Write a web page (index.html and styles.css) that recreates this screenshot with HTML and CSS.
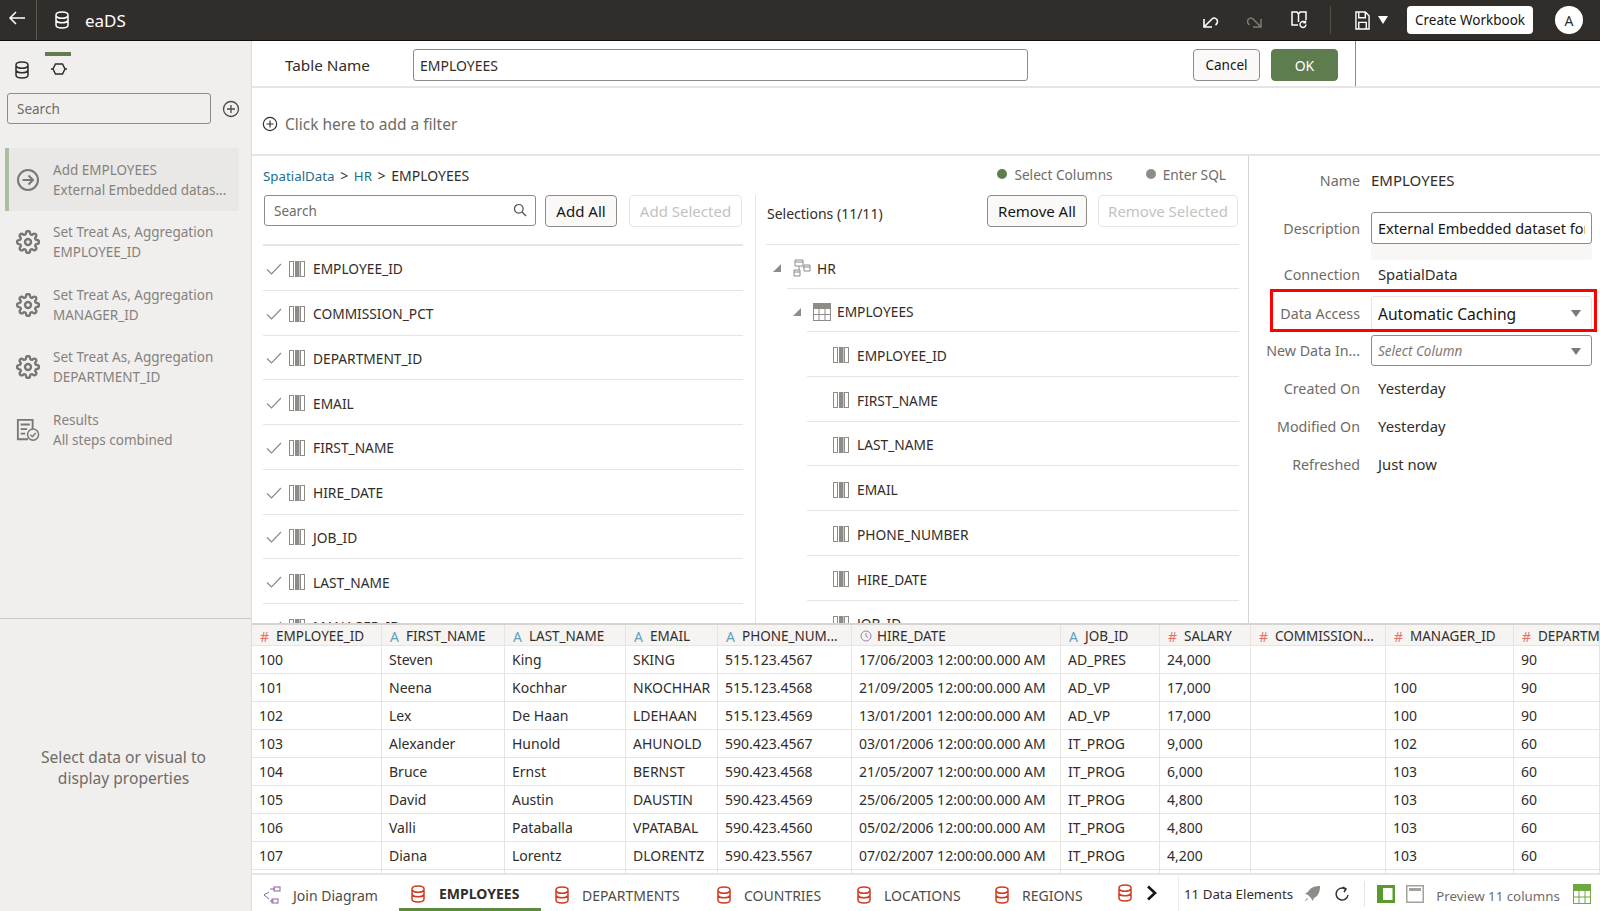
FILE: index.html
```html
<!DOCTYPE html>
<html lang="en">
  <head>
    <meta charset="UTF-8" />
    <meta name="viewport" content="width=device-width, initial-scale=1.0" />
    <title>eaDS</title>
    <link rel="stylesheet" href="styles.css">
  </head>

  <body>
    <svg class="defs" width="0" height="0">
      <symbol id="i-db" viewBox="0 0 16 18">
        <path d="M2 4c0-1.7 2-3 6-3s6 1.300 6 3v10c0 1.700-2 3-6 3s-6-1.300-6-3z M2 5c1 1.500 3.500 2.200 6 2.200S13 6.500 14 5 M2 9.500c1 1.500 3.500 2.200 6 2.200s5-.7 6-2.200" fill="none" stroke="currentColor" stroke-width="1.500"/>
      </symbol>
      <symbol id="i-step" viewBox="0 0 18 14">
        <path d="M1 7h2M15 7h2M5.500 2h7L15 7l-2.500 5h-7L3 7z" fill="none" stroke="currentColor" stroke-width="1.500"/>
      </symbol>
      <symbol id="i-plus" viewBox="0 0 18 18">
        <circle cx="9" cy="9" r="7.500" fill="none" stroke="currentColor" stroke-width="1.300"/>
        <path d="M9 5v8M5 9h8" stroke="currentColor" stroke-width="1.300"/>
      </symbol>
      <symbol id="i-go" viewBox="0 0 24 24">
        <circle cx="12" cy="12" r="10" fill="none" stroke="currentColor" stroke-width="2"/>
        <path d="M6.500 12h10M12.500 7.500l4.500 4.500-4.500 4.500" fill="none" stroke="currentColor" stroke-width="2"/>
      </symbol>
      <symbol id="i-gear" viewBox="0 0 24 24">
        <circle cx="12" cy="12" r="3" fill="none" stroke="currentColor" stroke-width="2.400"/>
        <path d="M19.400 15a1.650 1.650 0 0 0 .33 1.820l.06.06a2 2 0 0 1 0 2.830 2 2 0 0 1-2.830 0l-.06-.06a1.650 1.650 0 0 0-1.820-.33 1.650 1.650 0 0 0-1 1.510V21a2 2 0 0 1-2 2 2 2 0 0 1-2-2v-.09A1.650 1.650 0 0 0 9 19.400a1.650 1.650 0 0 0-1.820.33l-.06.06a2 2 0 0 1-2.830 0 2 2 0 0 1 0-2.830l.06-.06a1.650 1.650 0 0 0 .33-1.820 1.650 1.650 0 0 0-1.510-1H3a2 2 0 0 1-2-2 2 2 0 0 1 2-2h.09A1.650 1.650 0 0 0 4.600 9a1.650 1.650 0 0 0-.33-1.820l-.06-.06a2 2 0 0 1 0-2.830 2 2 0 0 1 2.830 0l.06.06a1.650 1.650 0 0 0 1.820.33H9a1.650 1.650 0 0 0 1-1.510V3a2 2 0 0 1 2-2 2 2 0 0 1 2 2v.09a1.650 1.650 0 0 0 1 1.510 1.650 1.650 0 0 0 1.820-.33l.06-.06a2 2 0 0 1 2.830 0 2 2 0 0 1 0 2.830l-.06.06a1.650 1.650 0 0 0-.33 1.820V9a1.650 1.650 0 0 0 1.510 1H21a2 2 0 0 1 2 2 2 2 0 0 1-2 2h-.09a1.650 1.650 0 0 0-1.510 1z" fill="none" stroke="currentColor" stroke-width="2.400"/>
      </symbol>
      <symbol id="i-results" viewBox="0 0 26 26">
        <path d="M13 23H2V2h16v10" fill="none" stroke="currentColor" stroke-width="2"/>
        <path d="M5 7h10M5 12h7M5 17h5" stroke="currentColor" stroke-width="2"/>
        <circle cx="18.500" cy="18" r="6" fill="none" stroke="currentColor" stroke-width="1.600"/>
        <path d="M15.500 18l2.200 2.300 3.600-4" fill="none" stroke="currentColor" stroke-width="1.500"/>
      </symbol>
      <symbol id="i-column" viewBox="0 0 16 16">
        <rect x=".5" y=".5" width="4" height="15" fill="#fff" stroke="#8f8b87"/>
        <rect x="6" y="0" width="4.500" height="16" fill="#8f8b87"/>
        <rect x="11.500" y=".5" width="4" height="15" fill="#fff" stroke="#8f8b87"/>
      </symbol>
      <symbol id="i-check" viewBox="0 0 16 12">
        <path d="M1 6.500l4.500 4.500L15 1" fill="none" stroke="#8a8682" stroke-width="1.100"/>
      </symbol>
      <symbol id="i-search" viewBox="0 0 14 14">
        <circle cx="5.800" cy="5.800" r="4.300" fill="none" stroke="#4f4b47" stroke-width="1.200"/>
        <path d="M9 9l4 4" stroke="#4f4b47" stroke-width="1.200"/>
      </symbol>
      <symbol id="i-corner" viewBox="0 0 10 10">
        <path d="M9 1v8H1z" fill="#8f8b87"/>
      </symbol>
      <symbol id="i-schema" viewBox="0 0 18 18">
        <path d="M2 1h8v6H2zM11 6h6v6h-6zM1 11h6v6H1zM2 3h8M11 8h6M1 13h6M6 7v4M10 8.500h1" fill="none" stroke="#8f8b87"/>
      </symbol>
      <symbol id="i-table" viewBox="0 0 18 18">
        <rect x=".5" y=".5" width="17" height="17" fill="#fff" stroke="#8f8b87"/>
        <rect x="0" y="0" width="18" height="6" fill="#8f8b87"/>
        <path d="M0 11.500h18M6 6v12M12 6v12" stroke="#8f8b87"/>
      </symbol>
      <symbol id="i-clock" viewBox="0 0 12 12">
        <circle cx="6" cy="6" r="5" fill="none" stroke="#9a86ad"/>
        <path d="M6 3v3.200l2 1.300" fill="none" stroke="#9a86ad"/>
      </symbol>
    </svg>

    <div class="app">
      <header class="topbar">
        <button class="back">
          <svg width="18" height="14" viewBox="0 0 18 14"><path d="M17 7H2M8 1L2 7l6 6" fill="none" stroke="#fff" stroke-width="1.500"/></svg>
        </button>
        <svg class="top-db" width="16" height="18"><use href="#i-db"/></svg>
        <span class="doc-name">eaDS</span>
        <div class="top-actions">
          <svg class="undo" width="18" height="18" viewBox="0 0 18 18"><path d="M2 8v8h8M2.500 15.500L10 8c2-2 5.500-.5 5.500 2.500 0 1.500-.7 2.500-2 3.500" fill="none" stroke="#fff" stroke-width="1.600"/></svg>
          <svg class="redo" width="18" height="18" viewBox="0 0 18 18"><path d="M16 8v8H8M15.500 15.500L8 8C6 6 2.500 7.500 2.500 10.500c0 1.500.7 2.500 2 3.500" fill="none" stroke="#7d7975" stroke-width="1.500"/></svg>
          <svg class="book" width="16" height="18" viewBox="0 0 16 18"><path d="M7 14H1V1h5l1.500 2L9 1h6v8M7.500 3v8" fill="none" stroke="#fff" stroke-width="1.500"/><path d="M15 13.500a3 3 0 1 1-1-2.300M14.500 9.500v2.200h-2.200" fill="none" stroke="#fff" stroke-width="1.400"/></svg>
          <span class="top-sep"></span>
          <svg class="save" width="15" height="19" viewBox="0 0 16 20"><path d="M1 1h10l4 4v14H1zM4 1v6h7V1M4 19v-7h8v7" fill="none" stroke="#fff" stroke-width="1.500"/></svg>
          <span class="caret"></span>
          <button class="create-btn">Create Workbook</button>
          <span class="avatar">A</span>
        </div>
      </header>

      <div class="main">
        <aside class="sidebar">
          <div class="side-upper">
            <div class="side-tabs">
              <svg class="side-tab" width="16" height="18"><use href="#i-db"/></svg>
              <span class="side-tab-on"><svg width="18" height="14"><use href="#i-step"/></svg></span>
            </div>
            <div class="side-search">
              <input class="field search-small" placeholder="Search" />
              <svg class="add-step" width="18" height="18"><use href="#i-plus"/></svg>
            </div>
            <ul class="steps">
              <li class="step step-on">
                <svg class="step-icon" width="24" height="24"><use href="#i-go"/></svg>
                <div><p>Add EMPLOYEES</p><p>External Embedded datas...</p></div>
              </li>
              <li class="step">
                <svg class="step-icon" width="24" height="24"><use href="#i-gear"/></svg>
                <div><p>Set Treat As, Aggregation</p><p>EMPLOYEE_ID</p></div>
              </li>
              <li class="step">
                <svg class="step-icon" width="24" height="24"><use href="#i-gear"/></svg>
                <div><p>Set Treat As, Aggregation</p><p>MANAGER_ID</p></div>
              </li>
              <li class="step">
                <svg class="step-icon" width="24" height="24"><use href="#i-gear"/></svg>
                <div><p>Set Treat As, Aggregation</p><p>DEPARTMENT_ID</p></div>
              </li>
              <li class="step">
                <svg class="step-icon" width="26" height="26"><use href="#i-results"/></svg>
                <div><p>Results</p><p>All steps combined</p></div>
              </li>
            </ul>
          </div>
          <div class="side-lower">Select data or visual to<br />display properties</div>
        </aside>

        <main class="content">
          <div class="name-row">
            <div class="name-box">
              <label class="name-label">Table Name</label>
              <input class="field name-input" value="EMPLOYEES" />
              <button class="btn cancel-btn">Cancel</button>
              <button class="btn ok-btn">OK</button>
            </div>
          </div>

          <div class="filter-row">
            <svg width="16" height="16"><use href="#i-plus"/></svg>
            <span>Click here to add a filter</span>
          </div>

          <div class="builder">
            <section class="columns">
              <div class="crumb-row">
                <div class="crumbs">
                  <a href="#">SpatialData</a> <i>&gt;</i> <a href="#">HR</a> <i>&gt;</i> <span>EMPLOYEES</span>
                </div>
                <div class="modes">
                  <span class="mode"><b class="dot dot-on"></b>Select Columns</span>
                  <span class="mode"><b class="dot"></b>Enter SQL</span>
                </div>
              </div>
              <div class="picker">
                <div class="pick-left">
                  <div class="pick-tools">
                    <div class="search-wrap">
                      <input class="field search-large" placeholder="Search" />
                      <svg class="search-icon" width="14" height="14"><use href="#i-search"/></svg>
                    </div>
                    <button class="btn add-all">Add All</button>
                    <button class="btn btn-off add-sel">Add Selected</button>
                  </div>
                  <ul class="col-list">
                    <li><svg width="16" height="12"><use href="#i-check"/></svg><svg width="16" height="16"><use href="#i-column"/></svg>EMPLOYEE_ID</li>
                    <li><svg width="16" height="12"><use href="#i-check"/></svg><svg width="16" height="16"><use href="#i-column"/></svg>COMMISSION_PCT</li>
                    <li><svg width="16" height="12"><use href="#i-check"/></svg><svg width="16" height="16"><use href="#i-column"/></svg>DEPARTMENT_ID</li>
                    <li><svg width="16" height="12"><use href="#i-check"/></svg><svg width="16" height="16"><use href="#i-column"/></svg>EMAIL</li>
                    <li><svg width="16" height="12"><use href="#i-check"/></svg><svg width="16" height="16"><use href="#i-column"/></svg>FIRST_NAME</li>
                    <li><svg width="16" height="12"><use href="#i-check"/></svg><svg width="16" height="16"><use href="#i-column"/></svg>HIRE_DATE</li>
                    <li><svg width="16" height="12"><use href="#i-check"/></svg><svg width="16" height="16"><use href="#i-column"/></svg>JOB_ID</li>
                    <li><svg width="16" height="12"><use href="#i-check"/></svg><svg width="16" height="16"><use href="#i-column"/></svg>LAST_NAME</li>
                    <li><svg width="16" height="12"><use href="#i-check"/></svg><svg width="16" height="16"><use href="#i-column"/></svg>MANAGER_ID</li>
                  </ul>
                </div>
                <div class="pick-right">
                  <div class="pick-tools">
                    <span class="sel-count">Selections (11/11)</span>
                    <button class="btn remove-all">Remove All</button>
                    <button class="btn btn-off remove-sel">Remove Selected</button>
                  </div>
                  <ul class="tree">
                    <li class="tree-top"><svg width="10" height="10"><use href="#i-corner"/></svg><svg class="tree-icon" width="18" height="18"><use href="#i-schema"/></svg>HR</li>
                    <li class="tree-mid"><svg width="10" height="10"><use href="#i-corner"/></svg><svg class="tree-icon" width="18" height="18"><use href="#i-table"/></svg>EMPLOYEES</li>
                    <li class="tree-leaf"><svg width="16" height="16"><use href="#i-column"/></svg>EMPLOYEE_ID</li>
                    <li class="tree-leaf"><svg width="16" height="16"><use href="#i-column"/></svg>FIRST_NAME</li>
                    <li class="tree-leaf"><svg width="16" height="16"><use href="#i-column"/></svg>LAST_NAME</li>
                    <li class="tree-leaf"><svg width="16" height="16"><use href="#i-column"/></svg>EMAIL</li>
                    <li class="tree-leaf"><svg width="16" height="16"><use href="#i-column"/></svg>PHONE_NUMBER</li>
                    <li class="tree-leaf"><svg width="16" height="16"><use href="#i-column"/></svg>HIRE_DATE</li>
                    <li class="tree-leaf"><svg width="16" height="16"><use href="#i-column"/></svg>JOB_ID</li>
                  </ul>
                </div>
              </div>
            </section>

            <section class="props">
              <div class="prop prop-name"><label>Name</label><span class="prop-plain">EMPLOYEES</span></div>
              <div class="prop prop-desc"><label>Description</label><input class="field desc-input" value="External Embedded dataset for EMPLOYEES" /></div>
              <div class="prop prop-conn"><label>Connection</label><span class="prop-value">SpatialData</span></div>
              <div class="prop prop-access">
                <label>Data Access</label>
                <div class="select select-soft">Automatic Caching<span class="select-arrow"></span></div>
                <span class="highlight"></span>
              </div>
              <div class="prop prop-new"><label>New Data In...</label><div class="select select-empty">Select Column<span class="select-arrow"></span></div></div>
              <div class="prop prop-line"><label>Created On</label><span class="prop-value">Yesterday</span></div>
              <div class="prop prop-line"><label>Modified On</label><span class="prop-value">Yesterday</span></div>
              <div class="prop prop-line"><label>Refreshed</label><span class="prop-value">Just now</span></div>
            </section>
          </div>

          <div class="preview">
            <div class="grid-row grid-head">
              <div><b class="t-num">#</b>EMPLOYEE_ID</div>
              <div><b class="t-txt">A</b>FIRST_NAME</div>
              <div><b class="t-txt">A</b>LAST_NAME</div>
              <div><b class="t-txt">A</b>EMAIL</div>
              <div><b class="t-txt">A</b>PHONE_NUM...</div>
              <div><svg class="t-clock" width="12" height="12"><use href="#i-clock"/></svg>HIRE_DATE</div>
              <div><b class="t-txt">A</b>JOB_ID</div>
              <div><b class="t-num">#</b>SALARY</div>
              <div><b class="t-num">#</b>COMMISSION...</div>
              <div><b class="t-num">#</b>MANAGER_ID</div>
              <div><b class="t-num">#</b>DEPARTM</div>
            </div>
            <div class="grid-row"><div>100</div><div>Steven</div><div>King</div><div>SKING</div><div>515.123.4567</div><div>17/06/2003 12:00:00.000 AM</div><div>AD_PRES</div><div>24,000</div><div></div><div></div><div>90</div></div>
            <div class="grid-row"><div>101</div><div>Neena</div><div>Kochhar</div><div>NKOCHHAR</div><div>515.123.4568</div><div>21/09/2005 12:00:00.000 AM</div><div>AD_VP</div><div>17,000</div><div></div><div>100</div><div>90</div></div>
            <div class="grid-row"><div>102</div><div>Lex</div><div>De Haan</div><div>LDEHAAN</div><div>515.123.4569</div><div>13/01/2001 12:00:00.000 AM</div><div>AD_VP</div><div>17,000</div><div></div><div>100</div><div>90</div></div>
            <div class="grid-row"><div>103</div><div>Alexander</div><div>Hunold</div><div>AHUNOLD</div><div>590.423.4567</div><div>03/01/2006 12:00:00.000 AM</div><div>IT_PROG</div><div>9,000</div><div></div><div>102</div><div>60</div></div>
            <div class="grid-row"><div>104</div><div>Bruce</div><div>Ernst</div><div>BERNST</div><div>590.423.4568</div><div>21/05/2007 12:00:00.000 AM</div><div>IT_PROG</div><div>6,000</div><div></div><div>103</div><div>60</div></div>
            <div class="grid-row"><div>105</div><div>David</div><div>Austin</div><div>DAUSTIN</div><div>590.423.4569</div><div>25/06/2005 12:00:00.000 AM</div><div>IT_PROG</div><div>4,800</div><div></div><div>103</div><div>60</div></div>
            <div class="grid-row"><div>106</div><div>Valli</div><div>Pataballa</div><div>VPATABAL</div><div>590.423.4560</div><div>05/02/2006 12:00:00.000 AM</div><div>IT_PROG</div><div>4,800</div><div></div><div>103</div><div>60</div></div>
            <div class="grid-row"><div>107</div><div>Diana</div><div>Lorentz</div><div>DLORENTZ</div><div>590.423.5567</div><div>07/02/2007 12:00:00.000 AM</div><div>IT_PROG</div><div>4,200</div><div></div><div>103</div><div>60</div></div>
            <div class="grid-row"><div></div><div></div><div></div><div></div><div></div><div></div><div></div><div></div><div></div><div></div><div></div></div>
          </div>

          <footer class="tabs">
            <a class="tab tab-join" href="#">
              <svg width="18" height="18" viewBox="0 0 18 18"><path d="M1 9l5-3M1 9l5 4M7 3h5M7 15h4" fill="none" stroke="#8b5f9e"/><rect x="11" y="1" width="6" height="4" fill="none" stroke="#8b5f9e"/><rect x="9" y="13" width="6" height="4" fill="none" stroke="#8b5f9e"/></svg>
              Join Diagram
            </a>
            <a class="tab tab-on" href="#"><svg class="tab-db" width="16" height="18"><use href="#i-db"/></svg>EMPLOYEES</a>
            <a class="tab tab-dept" href="#"><svg class="tab-db" width="16" height="18"><use href="#i-db"/></svg>DEPARTMENTS</a>
            <a class="tab tab-ctry" href="#"><svg class="tab-db" width="16" height="18"><use href="#i-db"/></svg>COUNTRIES</a>
            <a class="tab tab-loc" href="#"><svg class="tab-db" width="16" height="18"><use href="#i-db"/></svg>LOCATIONS</a>
            <a class="tab tab-reg" href="#"><svg class="tab-db" width="16" height="18"><use href="#i-db"/></svg>REGIONS</a>
            <svg class="tab-db tab-more" width="16" height="18"><use href="#i-db"/></svg>
            <svg class="chevron" width="12" height="16" viewBox="0 0 12 16"><path d="M2 1.500L9 8l-7 6.500" fill="none" stroke="#161513" stroke-width="2.600"/></svg>
            <div class="status">
              <span class="elements">11 Data Elements</span>
              <svg class="rocket" width="18" height="18" viewBox="0 0 18 18"><path d="M17 1c-6 0-10 2-12 6L2 8.500 5 10l3 3 1.500 3L11 13c4-2 6-6 6-12zM4 13l-2.500 3.500L5 14z" fill="#8f8b87"/></svg>
              <svg class="refresh" width="16" height="16" viewBox="0 0 16 16"><path d="M14 9a6 6 0 1 1-3-6.200M9 1l3 2-2 3" fill="none" stroke="#312d2a" stroke-width="1.500"/></svg>
              <span class="status-sep"></span>
              <svg width="18" height="18" viewBox="0 0 18 18"><rect width="18" height="18" fill="#5b9a2d"/><rect x="6" y="3" width="9.500" height="12" fill="#fff"/></svg>
              <svg class="panel-off" width="18" height="18" viewBox="0 0 18 18"><rect x=".75" y=".75" width="16.500" height="16.500" fill="#fff" stroke="#a5a19d" stroke-width="1.500"/><rect x="3" y="3" width="12" height="3" fill="#a5a19d"/></svg>
              <span class="preview-count">Preview 11 columns</span>
              <svg class="grid-icon" width="18" height="20" viewBox="0 0 18 20"><rect x=".5" y=".5" width="17" height="19" fill="#fff" stroke="#6fa83f"/><rect width="18" height="7" fill="#6fa83f"/><path d="M0 13h18M6 7v13M12 7v13" stroke="#6fa83f"/></svg>
            </div>
          </footer>
        </main>
      </div>
    </div>
  </body>
</html>
```

FILE: styles.css
```css
* {
  box-sizing: border-box;
  margin: 0;
  padding: 0;
}

html,
body {
  width: 100%;
  height: 100%;
  overflow: hidden;
}

body {
  font-family: "Noto Sans", "Open Sans", sans-serif;
  font-size: 14px;
  color: #312d2a;
  background: #fff;
}

ul {
  list-style: none;
}

a {
  color: inherit;
  text-decoration: none;
}

button,
input {
  font: inherit;
  color: inherit;
}

.defs {
  position: absolute;
}

.app {
  display: flex;
  flex-direction: column;
  width: 1600px;
  height: 911px;
}

/* top bar */
.topbar {
  display: flex;
  align-items: center;
  flex: 0 0 41px;
  background: #312d2a;
  border-bottom: 1px solid #100f0e;
  color: #fff;
}

.back {
  display: flex;
  align-items: center;
  justify-content: center;
  width: 37px;
  height: 100%;
  padding: 0 3px 4px 0;
  background: none;
  border: 0;
  border-right: 1px solid #5c5854;
}

.top-db {
  margin-left: 17px;
}

.doc-name {
  margin-left: 15px;
  font-size: 17px;
}

.top-actions {
  display: flex;
  align-items: center;
  margin-left: auto;
  height: 100%;
}

.redo {
  margin-left: 25px;
}

.book {
  margin-left: 28px;
}

.top-sep {
  width: 1px;
  height: 28px;
  margin: 0 24px 0 23px;
  background: #55514d;
}

.caret {
  margin-left: 8px;
  border-left: 5px solid transparent;
  border-right: 5px solid transparent;
  border-top: 8px solid #fff;
}

.create-btn {
  width: 126px;
  height: 28px;
  margin-left: 19px;
  background: #fff;
  border: 0;
  border-radius: 4px;
  color: #161513;
  font-size: 13.500px;
}

.avatar {
  display: flex;
  align-items: center;
  justify-content: center;
  width: 28px;
  height: 28px;
  margin: 0 17px 0 22px;
  background: #fff;
  border-radius: 50%;
  color: #312d2a;
  font-size: 14px;
}

.main {
  display: flex;
  flex: 1;
  min-height: 0;
}

/* left column */
.sidebar {
  display: flex;
  flex-direction: column;
  flex: 0 0 252px;
  background: #f1efed;
  border-right: 1px solid #dedcda;
}

.side-upper {
  flex: 0 0 578px;
  border-bottom: 1px solid #c9c7c4;
}

.side-tabs {
  display: flex;
  align-items: flex-start;
  height: 46px;
  padding: 11px 0 0 14px;
  color: #312d2a;
}

.side-tab {
  margin-top: 9px;
}

.side-tab-on {
  display: flex;
  justify-content: center;
  width: 26px;
  margin-left: 15px;
  padding: 6px 0 0 1px;
  border-top: 4px solid #5f7d4f;
}

.side-search {
  display: flex;
  align-items: center;
  margin: 6px 0 0 7px;
}

.search-small {
  width: 204px;
  height: 31px;
  padding-left: 9px;
  background: #f1efed;
  font-size: 13.500px;
}

.add-step {
  margin-left: 11px;
  color: #4f4b47;
}

.field {
  border: 1px solid #8f8b87;
  border-radius: 3px;
  outline: 0;
}

.field::placeholder {
  color: #6f6b67;
  opacity: 1;
}

.steps {
  margin: 24px 12px 0 5px;
  color: #85817d;
  font-size: 13.500px;
  white-space: nowrap;
}

.step {
  display: flex;
  align-items: center;
  height: 62.5px;
  padding: 1px 0 0 7px;
  border-left: 4px solid transparent;
  line-height: 20px;
}

.step-on {
  background: #e9e8e6;
  border-left-color: #a9bfa0;
}

.step-icon {
  flex: none;
  width: 24px;
  margin-right: 13px;
  color: #7a7672;
}

.side-lower {
  display: flex;
  align-items: center;
  justify-content: center;
  flex: 1;
  padding: 5px 4px 0 0;
  color: #6f6b67;
  font-size: 15.600px;
  line-height: 20.500px;
  text-align: center;
}

.content {
  display: flex;
  flex-direction: column;
  flex: 1;
  min-width: 0;
}

/* name and filter */
.name-row {
  flex: 0 0 47px;
  border-bottom: 2px solid #e6e5e3;
}

.name-box {
  display: flex;
  align-items: flex-start;
  width: 1104px;
  height: 100%;
  padding-top: 8px;
  border-right: 1px solid #8f8b87;
}

.name-label {
  width: 161px;
  padding: 6px 0 0 33px;
  font-size: 15.300px;
}

.name-input {
  width: 615px;
  height: 32px;
  padding-left: 6px;
  font-size: 14px;
}

.btn {
  height: 32px;
  background: #fbf9f8;
  border: 1px solid #8f8b87;
  border-radius: 4px;
  color: #161513;
  font-size: 15px;
}

.btn-off {
  background: #fff;
  border-color: #e6e5e3;
  color: #c4c2bf;
}

.cancel-btn {
  width: 67px;
  margin-left: 165px;
  font-size: 13.500px;
}

.ok-btn {
  width: 67px;
  margin-left: 11px;
  background: #5e7d4e;
  border-color: #5e7d4e;
  color: #fff;
  font-size: 14px;
}

.filter-row {
  display: flex;
  align-items: center;
  gap: 7px;
  flex: 0 0 68px;
  padding: 6px 0 0 10px;
  border-bottom: 2px solid #e6e5e3;
  color: #6f6b67;
  font-size: 15.500px;
}

.filter-row svg {
  color: #312d2a;
}

/* column picker */
.builder {
  display: flex;
  flex: 0 0 467px;
  min-height: 0;
}

.columns {
  flex: 0 0 997px;
  min-width: 0;
  border-right: 1px solid #d6d4d1;
}

.crumb-row {
  display: flex;
  align-items: center;
  justify-content: space-between;
  height: 39px;
  padding: 0 22px 0 11px;
}

.crumbs {
  font-size: 14px;
}

.crumbs a {
  color: #1b6f8e;
  font-size: 13.300px;
}

.crumbs i {
  margin: 0 2px;
  font-style: normal;
}

.modes {
  display: flex;
  gap: 33px;
  margin-top: -3px;
}

.mode {
  display: flex;
  align-items: center;
  gap: 7px;
  color: #6f6b67;
  font-size: 13.700px;
}

.dot {
  width: 10px;
  height: 10px;
  background: #8f8b87;
  border-radius: 50%;
}

.dot-on {
  background: #5e7d4e;
}

.picker {
  display: flex;
  height: 428px;
}

.pick-left {
  flex: 0 0 504px;
  padding: 0 12px 0 11px;
  overflow: hidden;
  border-right: 1px solid #e6e5e3;
}

.pick-right {
  flex: 1;
  min-width: 0;
  overflow: hidden;
}

.pick-tools {
  display: flex;
  align-items: center;
  height: 49px;
  padding-bottom: 18px;
}

.search-wrap {
  position: relative;
  margin-left: 1px;
}

.search-large {
  width: 272px;
  height: 31px;
  padding-left: 9px;
  font-size: 13.500px;
}

.search-icon {
  position: absolute;
  top: 8px;
  right: 9px;
}

.add-all {
  width: 72px;
  margin-left: 9px;
}

.add-sel {
  width: 113px;
  margin-left: 12px;
}

.col-list {
  border-top: 2px solid #e6e5e3;
  font-size: 13.750px;
}

.col-list li {
  display: flex;
  align-items: center;
  height: 44.75px;
  padding: 2px 0 0 3px;
  border-bottom: 1.5px solid #e6e5e3;
}

.col-list li svg:first-child {
  margin-right: 7px;
}

.col-list li svg:nth-child(2) {
  margin-right: 8px;
}

.sel-count {
  width: 220px;
  margin-left: 11px;
  padding-top: 5px;
}

.remove-all {
  width: 100px;
}

.remove-sel {
  width: 140px;
  margin-left: 11px;
}

.tree {
  margin-left: 10px;
  margin-right: 9px;
  font-size: 13.750px;
}

.tree li {
  display: flex;
  align-items: center;
  padding-top: 3px;
  border-top: 1.5px solid #e6e5e3;
}

.tree-top {
  height: 44px;
  padding-left: 6px;
}

.tree-mid {
  height: 43px;
  margin-left: 21px;
  padding-left: 5px;
}

.tree-leaf {
  height: 44.75px;
  margin-left: 41px;
  padding-left: 26px;
}

.tree-leaf svg {
  margin-right: 8px;
}

.tree-icon {
  margin: 0 6px 0 11px;
}

/* properties */
.props {
  flex: 1;
  min-width: 0;
}

.prop {
  display: flex;
  align-items: center;
  position: relative;
}

.prop label {
  flex: 0 0 111px;
  color: #6f6b67;
  font-size: 14.250px;
  text-align: right;
  white-space: nowrap;
}

.prop-name {
  height: 38px;
  margin-top: 5px;
}

.prop-plain {
  margin-left: 11px;
  font-size: 15px;
}

.prop-value {
  margin-left: 18px;
  font-size: 14.800px;
}

.prop-desc {
  height: 32px;
  margin-top: 13px;
}

.desc-input {
  width: 221px;
  height: 32px;
  margin-left: 11px;
  padding: 0 6px;
  font-size: 14.500px;
  color: #161513;
  box-shadow: 0 16px 0 #f8f7f6;
}

.prop-conn {
  height: 22px;
  margin-top: 19px;
}

.prop-access {
  height: 34px;
  margin-top: 11px;
}

.select {
  position: relative;
  display: flex;
  align-items: center;
  width: 221px;
  margin-left: 11px;
  padding-left: 6px;
  border-radius: 3px;
}

.select-soft {
  height: 34px;
  border: 1px solid #e6e5e3;
  font-size: 15.600px;
  padding-top: 2px;
  color: #161513;
}

.select-empty {
  height: 31px;
  border: 1px solid #8f8b87;
  color: #7d7975;
  font-size: 13.500px;
  font-style: italic;
}

.select-arrow {
  position: absolute;
  top: 50%;
  right: 10px;
  margin-top: -3px;
  border-left: 5px solid transparent;
  border-right: 5px solid transparent;
  border-top: 7px solid #7d7975;
}

.highlight {
  position: absolute;
  top: -7px;
  bottom: -2px;
  left: 21px;
  width: 327px;
  border: 3px solid #f00;
  pointer-events: none;
}

.prop-new {
  height: 31px;
  margin-top: 5px;
}

.prop-line {
  height: 38px;
}

.prop-new + .prop-line {
  margin-top: 3px;
}

/* data preview */
.preview {
  flex: 0 0 252px;
  overflow: hidden;
  border-top: 2px solid #d6d4d1;
  border-bottom: 2px solid #e6e5e3;
}

.grid-row {
  display: grid;
  grid-template-columns: 130px 123px 121px 92px 134px 209px 99px 91px 135px 128px 86px;
  height: 28px;
  border-bottom: 1px solid #e6e5e3;
}

.grid-row > div {
  display: flex;
  align-items: center;
  padding-left: 7px;
  overflow: hidden;
  border-right: 1px solid #e6e5e3;
  white-space: nowrap;
}

.grid-head {
  height: 21px;
  background: #f5f4f2;
}

.grid-head > div {
  padding-top: 2px;
  font-size: 13.500px;
}

.grid-head b {
  width: 17px;
  flex: none;
  padding-left: 1px;
  font-size: 14px;
  font-weight: 400;
}

.t-num {
  color: #e9705f;
}

.t-txt {
  color: #64a1c0;
}

.t-clock {
  flex: none;
  margin: 0 5px 0 1px;
}

/* bottom tabs */
.tabs {
  display: flex;
  align-items: center;
  flex: 1;
  min-height: 0;
}

.tab {
  display: flex;
  align-items: center;
  height: 100%;
  padding-top: 4px;
  white-space: nowrap;
  color: #4f4b47;
}

.tab-db {
  color: #d33a22;
}

.tab-join {
  width: 147px;
  padding-left: 11px;
  gap: 12px;
}

.tab-on {
  width: 142px;
  padding-left: 11px;
  gap: 13px;
  border-bottom: 3px solid #5e8a3c;
  font-weight: 700;
  color: #312d2a;
}

.tab-dept,
.tab-ctry,
.tab-loc,
.tab-reg {
  gap: 12px;
  padding-left: 13px;
}

.tab-dept {
  width: 162px;
}

.tab-ctry {
  width: 140px;
}

.tab-loc {
  width: 138px;
}

.tab-reg {
  width: 136px;
}

.tab-more {
  flex: none;
}

.chevron {
  margin-left: 13px;
}

.status {
  display: flex;
  align-items: center;
  height: 100%;
  margin-left: 20px;
  padding: 2px 0 0 5px;
  border-left: 1px solid #efeeec;
  font-size: 13.300px;
}

.rocket {
  margin-left: 10px;
}

.refresh {
  margin-left: 13px;
}

.status-sep {
  width: 1px;
  height: 26px;
  margin: 0 12px 0 14px;
  background: #e6e5e3;
}

.panel-off {
  margin-left: 11px;
}

.preview-count {
  margin-left: 12px;
  padding-top: 3px;
  color: #6f6b67;
}

.grid-icon {
  margin-left: 13px;
}
```
